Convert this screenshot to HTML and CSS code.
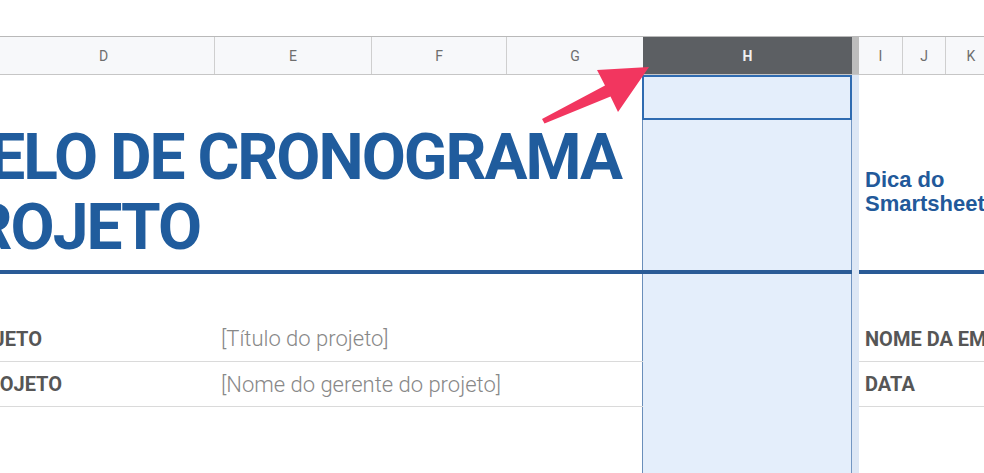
FILE: index.html
```html
<!DOCTYPE html>
<html lang="pt">
<head>
<meta charset="utf-8">
<title>Modelo de cronograma</title>
<link rel="stylesheet" href="styles.css">
</head>
<body>
<div class="page">
  <div class="topspace"></div>
  <div class="colheads">
    <div class="ch ch-d">D</div>
    <div class="ch ch-e">E</div>
    <div class="ch ch-f">F</div>
    <div class="ch ch-g">G</div>
    <div class="ch ch-h">H</div>
    <div class="ch ch-strip"></div>
    <div class="ch ch-i">I</div>
    <div class="ch ch-j">J</div>
    <div class="ch ch-k">K</div>
  </div>
  <div class="sheet">
    <div class="hcol"></div>
    <div class="hstrip"></div>
    <div class="hsel"></div>
    <div class="title">
      <div class="tline tline1"><span>MODELO DE CRONOGRAMA</span></div>
      <div class="tline tline2"><span>DO PROJETO</span></div>
    </div>
    <div class="tip">Dica do<br>Smartsheet</div>
    <div class="rule rule-left"></div>
    <div class="rule rule-right"></div>
    <div class="row row1 left">
      <div class="lab"><span>NOME DO PROJETO</span></div>
      <div class="val">[Título do projeto]</div>
    </div>
    <div class="row row2 left">
      <div class="lab lab2"><span>GERENTE DO PROJETO</span></div>
      <div class="val">[Nome do gerente do projeto]</div>
    </div>
    <div class="row row1 right"><div class="rlab">NOME DA EMPRESA</div></div>
    <div class="row row2 right"><div class="rlab">DATA</div></div>
  </div>
  <svg class="arrow" width="984" height="473" viewBox="0 0 984 473">
    <polygon fill="#f2365f" points="649,67 597,70 605,85.5 542,119 544.5,123.5 610.5,96.5 618,112"/>
  </svg>
</div>
</body>
</html>
```
FILE: styles.css
```css
html, body {
  margin: 0;
  padding: 0;
  background: #ffffff;
  overflow: hidden;
}
body {
  width: 984px;
  height: 473px;
  font-family: Roboto, "Liberation Sans", Arial, sans-serif;
}
.page {
  position: relative;
  width: 984px;
  height: 473px;
  overflow: hidden;
}
.topspace {
  height: 36px;
}
.colheads {
  display: flex;
  height: 37px;
  border-top: 1px solid #b9b9b9;
  border-bottom: 1px solid #c6c6c6;
  background: #f7f8fa;
}
.ch {
  box-sizing: border-box;
  display: flex;
  align-items: center;
  justify-content: center;
  font-size: 14px;
  color: #6e6e6e;
  border-right: 1px solid #cfcfcf;
  flex: none;
}
.ch-d { width: 222px; margin-left: -7px; }
.ch-e { width: 157px; }
.ch-f { width: 135px; }
.ch-g { width: 136px; border-right: none; }
.ch-h {
  width: 209px;
  background: #5c5f63;
  color: #f0f0f0;
  font-weight: 700;
  border-right: none;
}
.ch-strip {
  width: 7px;
  background: #bdbdbd;
  border-right: none;
}
.ch-i { width: 44px; }
.ch-j { width: 43px; }
.ch-k { width: 50px; border-right: none; }

.sheet {
  display: grid;
  grid-template-columns: 643px 209px 7px 1fr;
  grid-template-rows: 45px 150px 4px 42px 46px 45px 1fr;
  height: 398px;
}
.hcol {
  grid-column: 2;
  grid-row: 1 / -1;
  background: #e4eefb;
  border-left: 1px solid #6a8eba;
  border-right: 1px solid #7396c2;
  margin-left: -1px;
}
.hstrip {
  grid-column: 3;
  grid-row: 1 / -1;
  background: #dde7f5;
}
.hsel {
  grid-column: 2;
  grid-row: 1;
  border: 2px solid #2f6bb1;
  margin-left: -1px;
}
.title {
  grid-column: 1;
  grid-row: 1 / 3;
  overflow: hidden;
  padding-top: 48px;
  display: flex;
  flex-direction: column;
}
.tline {
  display: flex;
  justify-content: flex-end;
  font-weight: 700;
  font-size: 64px;
  line-height: 70px;
  letter-spacing: -2px;
  color: #205c9d;
  white-space: nowrap;
}
.tline1 { width: 621px; }
.tline2 { width: 200px; }
.tip {
  grid-column: 4;
  grid-row: 1 / 3;
  padding: 93px 0 0 6px;
  font-family: "Liberation Sans", Arial, sans-serif;
  font-size: 22px;
  line-height: 24px;
  font-weight: 700;
  color: #22599a;
  white-space: nowrap;
  overflow: hidden;
}
.rule {
  grid-row: 3;
  background: #2a5b96;
}
.rule-left { grid-column: 1 / 3; }
.rule-right { grid-column: 4; }

.row {
  display: flex;
  align-items: center;
  border-bottom: 1px solid #dadada;
  box-sizing: border-box;
  overflow: hidden;
}
.row1 { grid-row: 5; }
.row2 { grid-row: 6; }
.left { grid-column: 1; }
.right { grid-column: 4; }
.lab {
  width: 42px;
  display: flex;
  justify-content: flex-end;
  flex: none;
  font-size: 20px;
  font-weight: 700;
  color: #565656;
  white-space: nowrap;
}
.lab2 { width: 62px; }
.val {
  font-size: 22px;
  font-weight: 300;
  color: #888888;
  white-space: nowrap;
}
.row1 .val { margin-left: 179px; }
.row2 .val { margin-left: 159px; }
.rlab {
  padding-left: 6px;
  font-size: 20px;
  font-weight: 700;
  color: #565656;
  white-space: nowrap;
}
.arrow {
  position: absolute;
  left: 0;
  top: 0;
  pointer-events: none;
}
```
